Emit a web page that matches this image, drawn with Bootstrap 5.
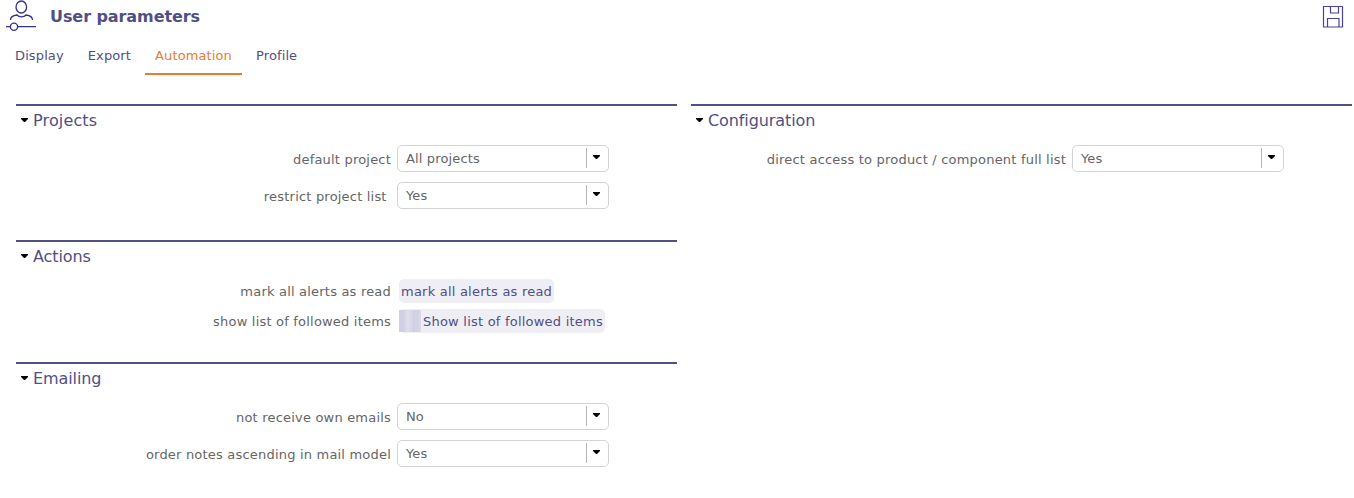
<!DOCTYPE html>
<html lang="en">
<head>
<meta charset="utf-8">
<meta name="viewport" content="width=device-width, initial-scale=1">
<title>User parameters</title>
<link href="https://cdn.jsdelivr.net/npm/bootstrap@5.3.0/dist/css/bootstrap.min.css" rel="stylesheet">
<style>
  body { font-family: Verdana, "DejaVu Sans", sans-serif; font-size: 13px; line-height: 20px; color: #656565; background: #fff; overflow: hidden; }
  .page-head { height: 36px; padding: 0 10px 0 6px; color: #504f85; }
  .page-title { font-size: 16px; font-weight: 700; line-height: 34px; margin: 0 0 0 14px; letter-spacing: -.08px; }
  .param-tabs { height: 39px; padding-left: 5px; gap: 4px; }
  .param-tabs .nav-link { color: #504f85; padding: 10px 10px 7px; height: 39px; border-bottom: 2px solid transparent; letter-spacing: .12px; }
  .param-tabs .nav-link.active { color: #e97b2c; border-color: #e97b2c; }
  .panes { padding: 29px 2px 0 16px; gap: 14px; }
  .section-box { border-top: 2px solid #504f85; }
  .section-title { font-size: 16px; line-height: 28px; height: 28px; font-weight: 400; color: #504f85; margin: 0; padding: 1px 0 0 5px; gap: 5px; letter-spacing: -.1px; }
  .section-title svg { margin-top: -1px; }
  .title-wide { letter-spacing: .15px; }
  .param-row { gap: 6px; }
  .param-label { width: 375px; text-align: right; white-space: pre; letter-spacing: .2px; margin-right: 0; padding-top: 5px; }
  .label-act { padding-top: 2px; }
  .pick { width: 212px; height: 27px; border: 1px solid #d3d3d3; border-radius: 5px; padding-left: 8px; letter-spacing: .15px; }
  .pick-arrow { width: 22px; height: 20px; border-left: 1px solid #b5b5b5; padding: 7px 0 0 6px; line-height: 0; margin-bottom: 1px; }
  .pick-arrow svg { display: block; }
  .act { height: 24px; line-height: 23px; margin-left: 2px; border-radius: 5px; padding: 1px 2px 0; background: #efeef5; color: #504f85; font-size: 13px; border: 0; letter-spacing: .22px; }
  .stripe { width: 22px; height: 22px; margin: -1px 2px 0 -2px; background: linear-gradient(90deg, #cfcee2 0 3px, #d3d2e4 4px 6px, #dddce9 7px 11px, #d4d3e5 12px, #dcdbe9 13px, #cfcee2 14px 16px, #dad9e8 17px, #d0cfe3 18px 19px, #dad9e8 20px 22px); }
</style>
</head>
<body>
<header class="page-head d-flex justify-content-between">
  <div class="d-flex">
    <svg width="30" height="32" viewBox="0 0 30 32" fill="none" stroke="#34338c" stroke-width="1.3"><ellipse cx="15.3" cy="7" rx="5.3" ry="6"/><path d="M4.500 20c0-3 2.500-4.500 6.500-5 2 2.500 7 2.500 9 0 4 .5 6.500 2 6.500 5M0 26.700h4.500M11.500 26.700H30"/><circle cx="8" cy="26.800" r="3.600"/></svg>
    <h1 class="page-title">User parameters</h1>
  </div>
  <svg width="22" height="30" viewBox="0 0 22 30" fill="none" stroke="#4644a0" stroke-width="1.200"><path d="M1.500 6.500h19v20.500h-19zM8.500 6.500V13h8V6.500M5.500 27v-8.500h11.500v8.500"/></svg>
</header>
<nav class="nav param-tabs">
  <a class="nav-link" href="#">Display</a>
  <a class="nav-link" href="#">Export</a>
  <a class="nav-link active" href="#">Automation</a>
  <a class="nav-link" href="#">Profile</a>
</nav>
<main class="panes d-flex align-items-start">
  <div class="col">
    <section class="section-box" style="height:136px">
      <h2 class="section-title title-wide d-flex align-items-center"><svg width="7" height="4"><path d="M0 0h7v1L4 4H3L0 1z"/></svg>Projects</h2>
      <div class="param-row d-flex" style="margin-top:11px"><span class="param-label">default project</span><div class="pick d-flex align-items-center justify-content-between">All projects<span class="pick-arrow"><svg width="7" height="4"><path d="M0 0h7v1L4 4H3L0 1z"/></svg></span></div></div>
      <div class="param-row d-flex" style="margin-top:10px"><span class="param-label">restrict project list&nbsp;</span><div class="pick d-flex align-items-center justify-content-between">Yes<span class="pick-arrow"><svg width="7" height="4"><path d="M0 0h7v1L4 4H3L0 1z"/></svg></span></div></div>
    </section>
    <section class="section-box" style="height:122px">
      <h2 class="section-title d-flex align-items-center"><svg width="7" height="4"><path d="M0 0h7v1L4 4H3L0 1z"/></svg>Actions</h2>
      <div class="param-row d-flex align-items-center" style="margin-top:9px"><span class="param-label label-act">mark all alerts as read</span><button class="act">mark all alerts as read</button></div>
      <div class="param-row d-flex align-items-center" style="margin-top:6px"><span class="param-label label-act">show list of followed items</span><button class="act d-flex align-items-center"><span class="stripe"></span>Show list of followed items</button></div>
    </section>
    <section class="section-box">
      <h2 class="section-title d-flex align-items-center"><svg width="7" height="4"><path d="M0 0h7v1L4 4H3L0 1z"/></svg>Emailing</h2>
      <div class="param-row d-flex" style="margin-top:11px"><span class="param-label">not receive own emails</span><div class="pick d-flex align-items-center justify-content-between">No<span class="pick-arrow"><svg width="7" height="4"><path d="M0 0h7v1L4 4H3L0 1z"/></svg></span></div></div>
      <div class="param-row d-flex" style="margin-top:10px"><span class="param-label">order notes ascending in mail model</span><div class="pick d-flex align-items-center justify-content-between">Yes<span class="pick-arrow"><svg width="7" height="4"><path d="M0 0h7v1L4 4H3L0 1z"/></svg></span></div></div>
    </section>
  </div>
  <div class="col">
    <section class="section-box">
      <h2 class="section-title d-flex align-items-center"><svg width="7" height="4"><path d="M0 0h7v1L4 4H3L0 1z"/></svg>Configuration</h2>
      <div class="param-row d-flex" style="margin-top:11px"><span class="param-label">direct access to product / component full list</span><div class="pick d-flex align-items-center justify-content-between">Yes<span class="pick-arrow"><svg width="7" height="4"><path d="M0 0h7v1L4 4H3L0 1z"/></svg></span></div></div>
    </section>
  </div>
</main>
<script src="https://cdn.jsdelivr.net/npm/bootstrap@5.3.0/dist/js/bootstrap.bundle.min.js"></script>
</body>
</html>
